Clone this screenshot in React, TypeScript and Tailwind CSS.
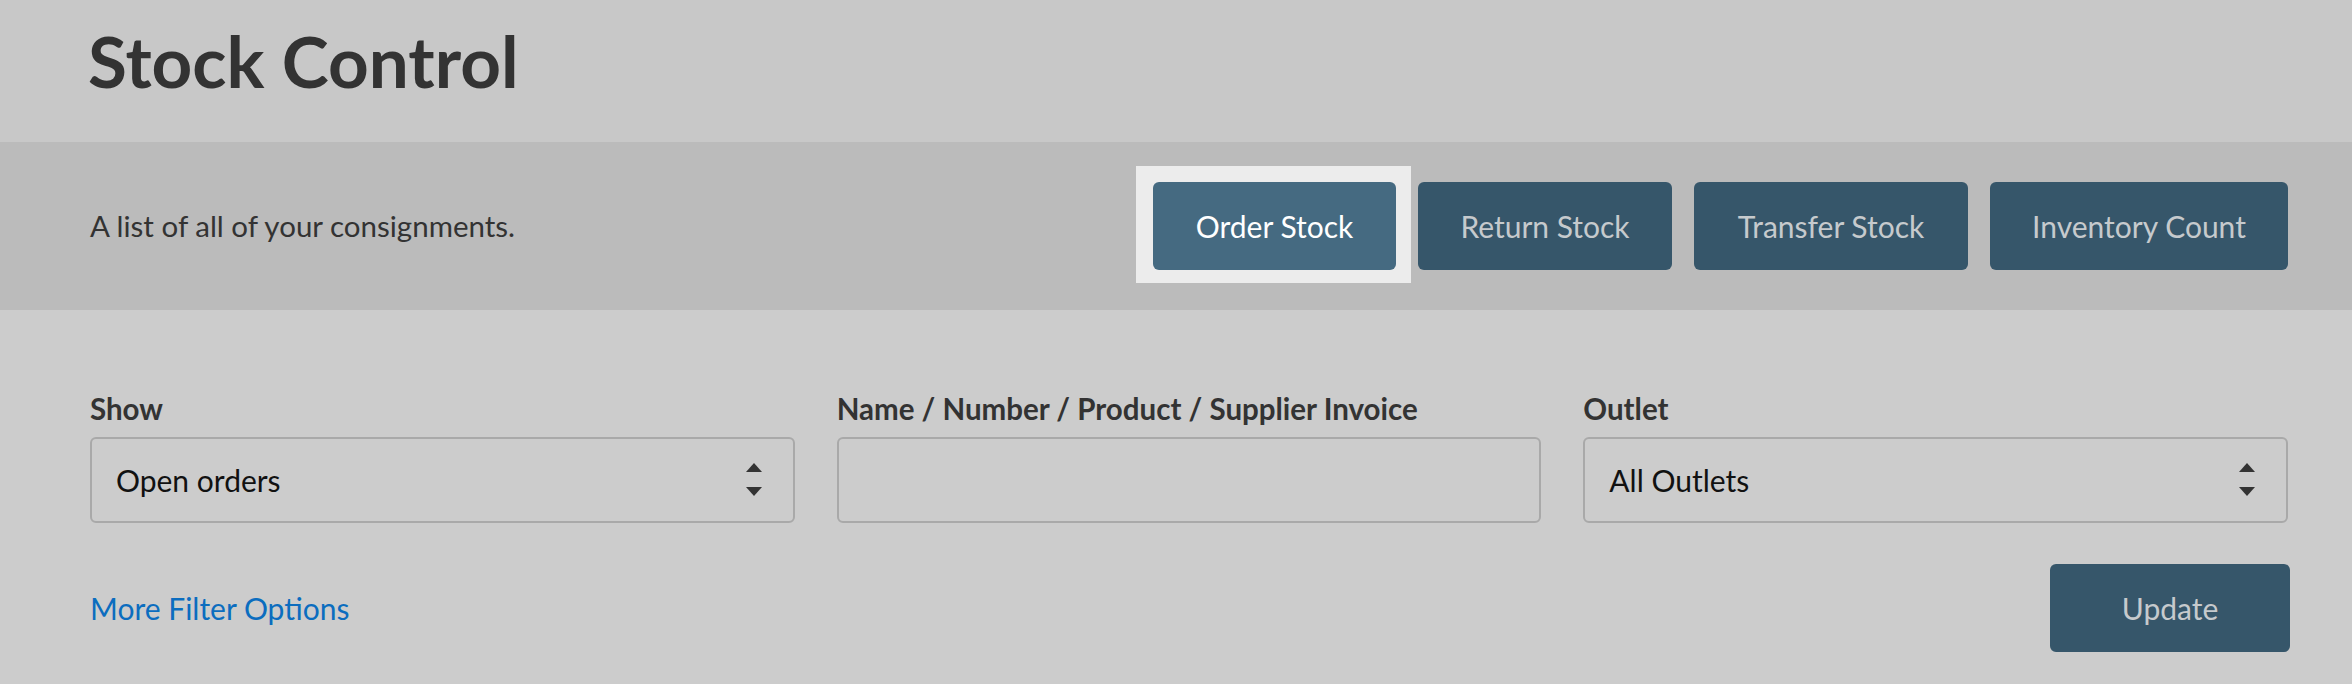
import React from "react";

function Arrows() {
  return (
    <svg width="18" height="34" viewBox="0 0 18 34" className="shrink-0">
      <polygon points="1,9 9,0 17,9" fill="#333333" />
      <polygon points="1,24 17,24 9,33" fill="#333333" />
    </svg>
  );
}

function Field({ label, children }: { label: string; children: React.ReactNode }) {
  return (
    <div className="flex flex-col">
      <label className="text-[29.5px] leading-[40px] font-bold text-[#333333]">{label}</label>
      <div className="mt-[8px] h-[86px] rounded-[6px] border-2 border-[#a9a9a9] flex items-center justify-between pl-[24px] pr-[30px]">
        {children}
      </div>
    </div>
  );
}

export default function App() {
  const btn =
    "h-[88px] rounded-[6px] text-[30px] flex items-center justify-center bg-[#36566a] text-[#c6cacd]";
  return (
    <div className="w-[2352px] h-[684px] bg-[#cccccc] font-['Lato',sans-serif] overflow-hidden">
      <div className="h-[142px] bg-[#c8c8c8] pl-[88px] pr-[64px]">
        <h1 className="pt-[25px] text-[71px] leading-[72px] font-bold text-[#333333]">Stock Control</h1>
      </div>
      <div className="h-[168px] bg-[#bbbbbb] pl-[90px] pr-[64px] flex items-center justify-between">
        <p className="text-[29.5px] text-[#333333]">A list of all of your consignments.</p>
        <div className="flex items-center gap-[22px]">
          <div className="relative">
            <div className="absolute -top-[16px] -bottom-[13px] -left-[17px] -right-[15px] bg-[#ececec]" />
            <button className="relative h-[88px] w-[243px] rounded-[6px] text-[30px] flex items-center justify-center bg-[#456a81] text-white">
              Order Stock
            </button>
          </div>
          <button className={btn + " w-[254px]"}>Return Stock</button>
          <button className={btn + " w-[274px]"}>Transfer Stock</button>
          <button className={btn + " w-[298px]"}>Inventory Count</button>
        </div>
      </div>
      <div className="pl-[90px] pr-[64px] pt-[79px]">
        <div className="grid grid-cols-3 gap-[42px]">
          <Field label="Show">
            <span className="text-[30px] text-[#111111]">Open orders</span>
            <Arrows />
          </Field>
          <Field label="Name / Number / Product / Supplier Invoice">
            <span />
          </Field>
          <Field label="Outlet">
            <span className="text-[30px] text-[#111111]">All Outlets</span>
            <Arrows />
          </Field>
        </div>
        <div className="mt-[41px] flex items-center justify-between">
          <a className="text-[30px] text-[#0b6dbf]">More Filter Options</a>
          <button className="h-[88px] w-[240px] rounded-[6px] text-[30px] flex items-center justify-center bg-[#36566a] text-[#c6cacd] mr-[-2px]">
            Update
          </button>
        </div>
      </div>
    </div>
  );
}
